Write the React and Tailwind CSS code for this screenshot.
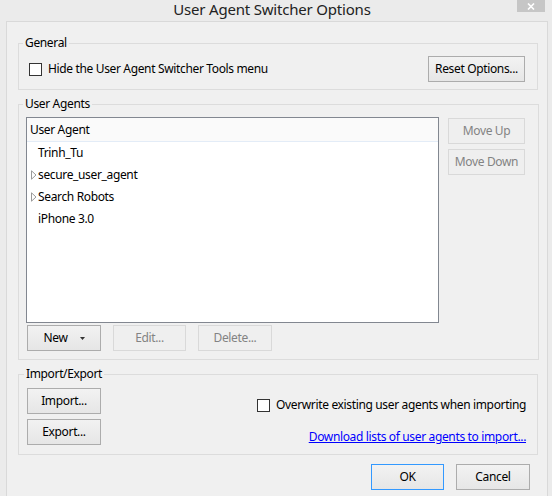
import React from "react";

const font = { fontFamily: '"Noto Sans", "Open Sans", sans-serif' };

function Btn({ children, className = "", disabled = false, def = false }) {
  return (
    <div
      className={
        "flex items-center justify-center h-[26px] text-[12px] border " +
        (disabled
          ? "border-[#d9d9d9] bg-[#efefef] text-[#838383] "
          : def
          ? "border-[#3399ff] bg-gradient-to-b from-[#f2f2f2] to-[#e6e6e6] text-black "
          : "border-[#acacac] bg-gradient-to-b from-[#f2f2f2] to-[#e6e6e6] text-black ") +
        className
      }
    >
      {children}
    </div>
  );
}

function Check() {
  return <div className="w-[13px] h-[13px] border border-[#333333] bg-white shrink-0" />;
}

function Tri() {
  return (
    <svg width="6" height="10" viewBox="0 0 6 10" className="shrink-0">
      <path d="M0.5 0.8 L5 5 L0.5 9.2 Z" fill="none" stroke="#9a9a9a" strokeWidth="1" />
    </svg>
  );
}

function Group({ title, children, className = "", legendClass = "" }) {
  return (
    <fieldset className={"border border-[#dcdcdc] " + className}>
      <legend className={"px-[2px] text-[12px] leading-[16px] text-black " + legendClass}>{title}</legend>
      {children}
    </fieldset>
  );
}

export default function App() {
  return (
    <div
      className="w-[552px] h-[496px] bg-[#ebebeb] flex flex-col overflow-hidden tracking-[-0.35px]"
      style={font}
    >
      <div className="h-[21px] flex items-start shrink-0">
        <div className="flex-1 text-center text-[15px] leading-[18px] pl-[27px] text-[#222] tracking-[-0.2px]">
          User Agent Switcher Options
        </div>
        <div className="w-[28px] h-[12px] bg-[#c6c6c6] mr-[7px] flex items-center justify-center">
          <svg width="8" height="7" viewBox="0 0 8 7">
            <path d="M1 0.5 L7 6.5 M7 0.5 L1 6.5" stroke="white" strokeWidth="1.6" />
          </svg>
        </div>
      </div>
      <div className="flex-1 ml-[6px] mr-[4px] border-l border-r border-t border-[#d9d9d9] bg-[#f0f0f0] pt-[13px] pl-[11px] pr-[9px] flex flex-col">
        <Group title="General" legendClass="ml-[-6px]" className="pt-[5px] pb-[7px] pl-[10px] pr-[12px]">
          <div className="flex items-center">
            <Check />
            <span className="ml-[6px] text-[12px] text-black">Hide the User Agent Switcher Tools menu</span>
            <div className="flex-1" />
            <Btn className="w-[97px]">Reset Options...</Btn>
          </div>
        </Group>

        <Group title="User Agents" legendClass="ml-[-3px]" className="mt-[6px] pt-[5px] pb-[8px] pl-[7px] pr-[13px]">
          <div className="flex items-start">
            <div className="w-[413px] h-[206px] border border-[#828790] bg-white flex flex-col">
              <div className="h-[24px] bg-[#fafafa] border-b border-[#e3ecf7] flex items-center pl-[3px] text-[12px] text-black">
                User Agent
              </div>
              {[
                ["Trinh_Tu", false],
                ["secure_user_agent", true],
                ["Search Robots", true],
                ["iPhone 3.0", false],
              ].map(([t, tri]) => (
                <div key={t} className="h-[22px] flex items-center text-[12px] text-black">
                  <div className="w-[11px] flex justify-end pr-[1px]">{tri ? <Tri /> : null}</div>
                  <span>{t}</span>
                </div>
              ))}
            </div>
            <div className="ml-[9px] mt-[1px] flex flex-col gap-[5px]">
              <Btn disabled className="w-[77px]">Move Up</Btn>
              <Btn disabled className="w-[77px]">Move Down</Btn>
            </div>
          </div>
          <div className="flex mt-[2px] ml-[1px] gap-[12px]">
            <Btn className="w-[74px]">
              <span className="mr-[12px]">New</span>
              <svg width="5" height="3" viewBox="0 0 5 3">
                <path d="M0 0 H5 L2.5 3 Z" fill="#333" />
              </svg>
            </Btn>
            <Btn disabled className="w-[73px]">Edit...</Btn>
            <Btn disabled className="w-[74px]">Delete...</Btn>
          </div>
        </Group>

        <Group title="Import/Export" legendClass="ml-[-3px]" className="mt-[6px] pt-[6px] pb-[8px] pl-[8px] pr-[11px]">
          <div className="flex">
            <div className="flex flex-col gap-[5px]">
              <Btn className="w-[74px]">Import...</Btn>
              <Btn className="w-[74px]">Export...</Btn>
            </div>
            <div className="flex-1 flex flex-col items-end">
              <div className="flex items-center mt-[8px]">
                <Check />
                <span className="ml-[6px] text-[12px] text-black">Overwrite existing user agents when importing</span>
              </div>
              <div className="mt-[14px] text-[12px] text-[#0000ff] underline">
                Download lists of user agents to import...
              </div>
            </div>
          </div>
        </Group>

        <div className="flex justify-end gap-[12px] mt-[9px] pr-[8px]">
          <Btn def className="w-[73px]">OK</Btn>
          <Btn className="w-[74px]">Cancel</Btn>
        </div>
      </div>
    </div>
  );
}
